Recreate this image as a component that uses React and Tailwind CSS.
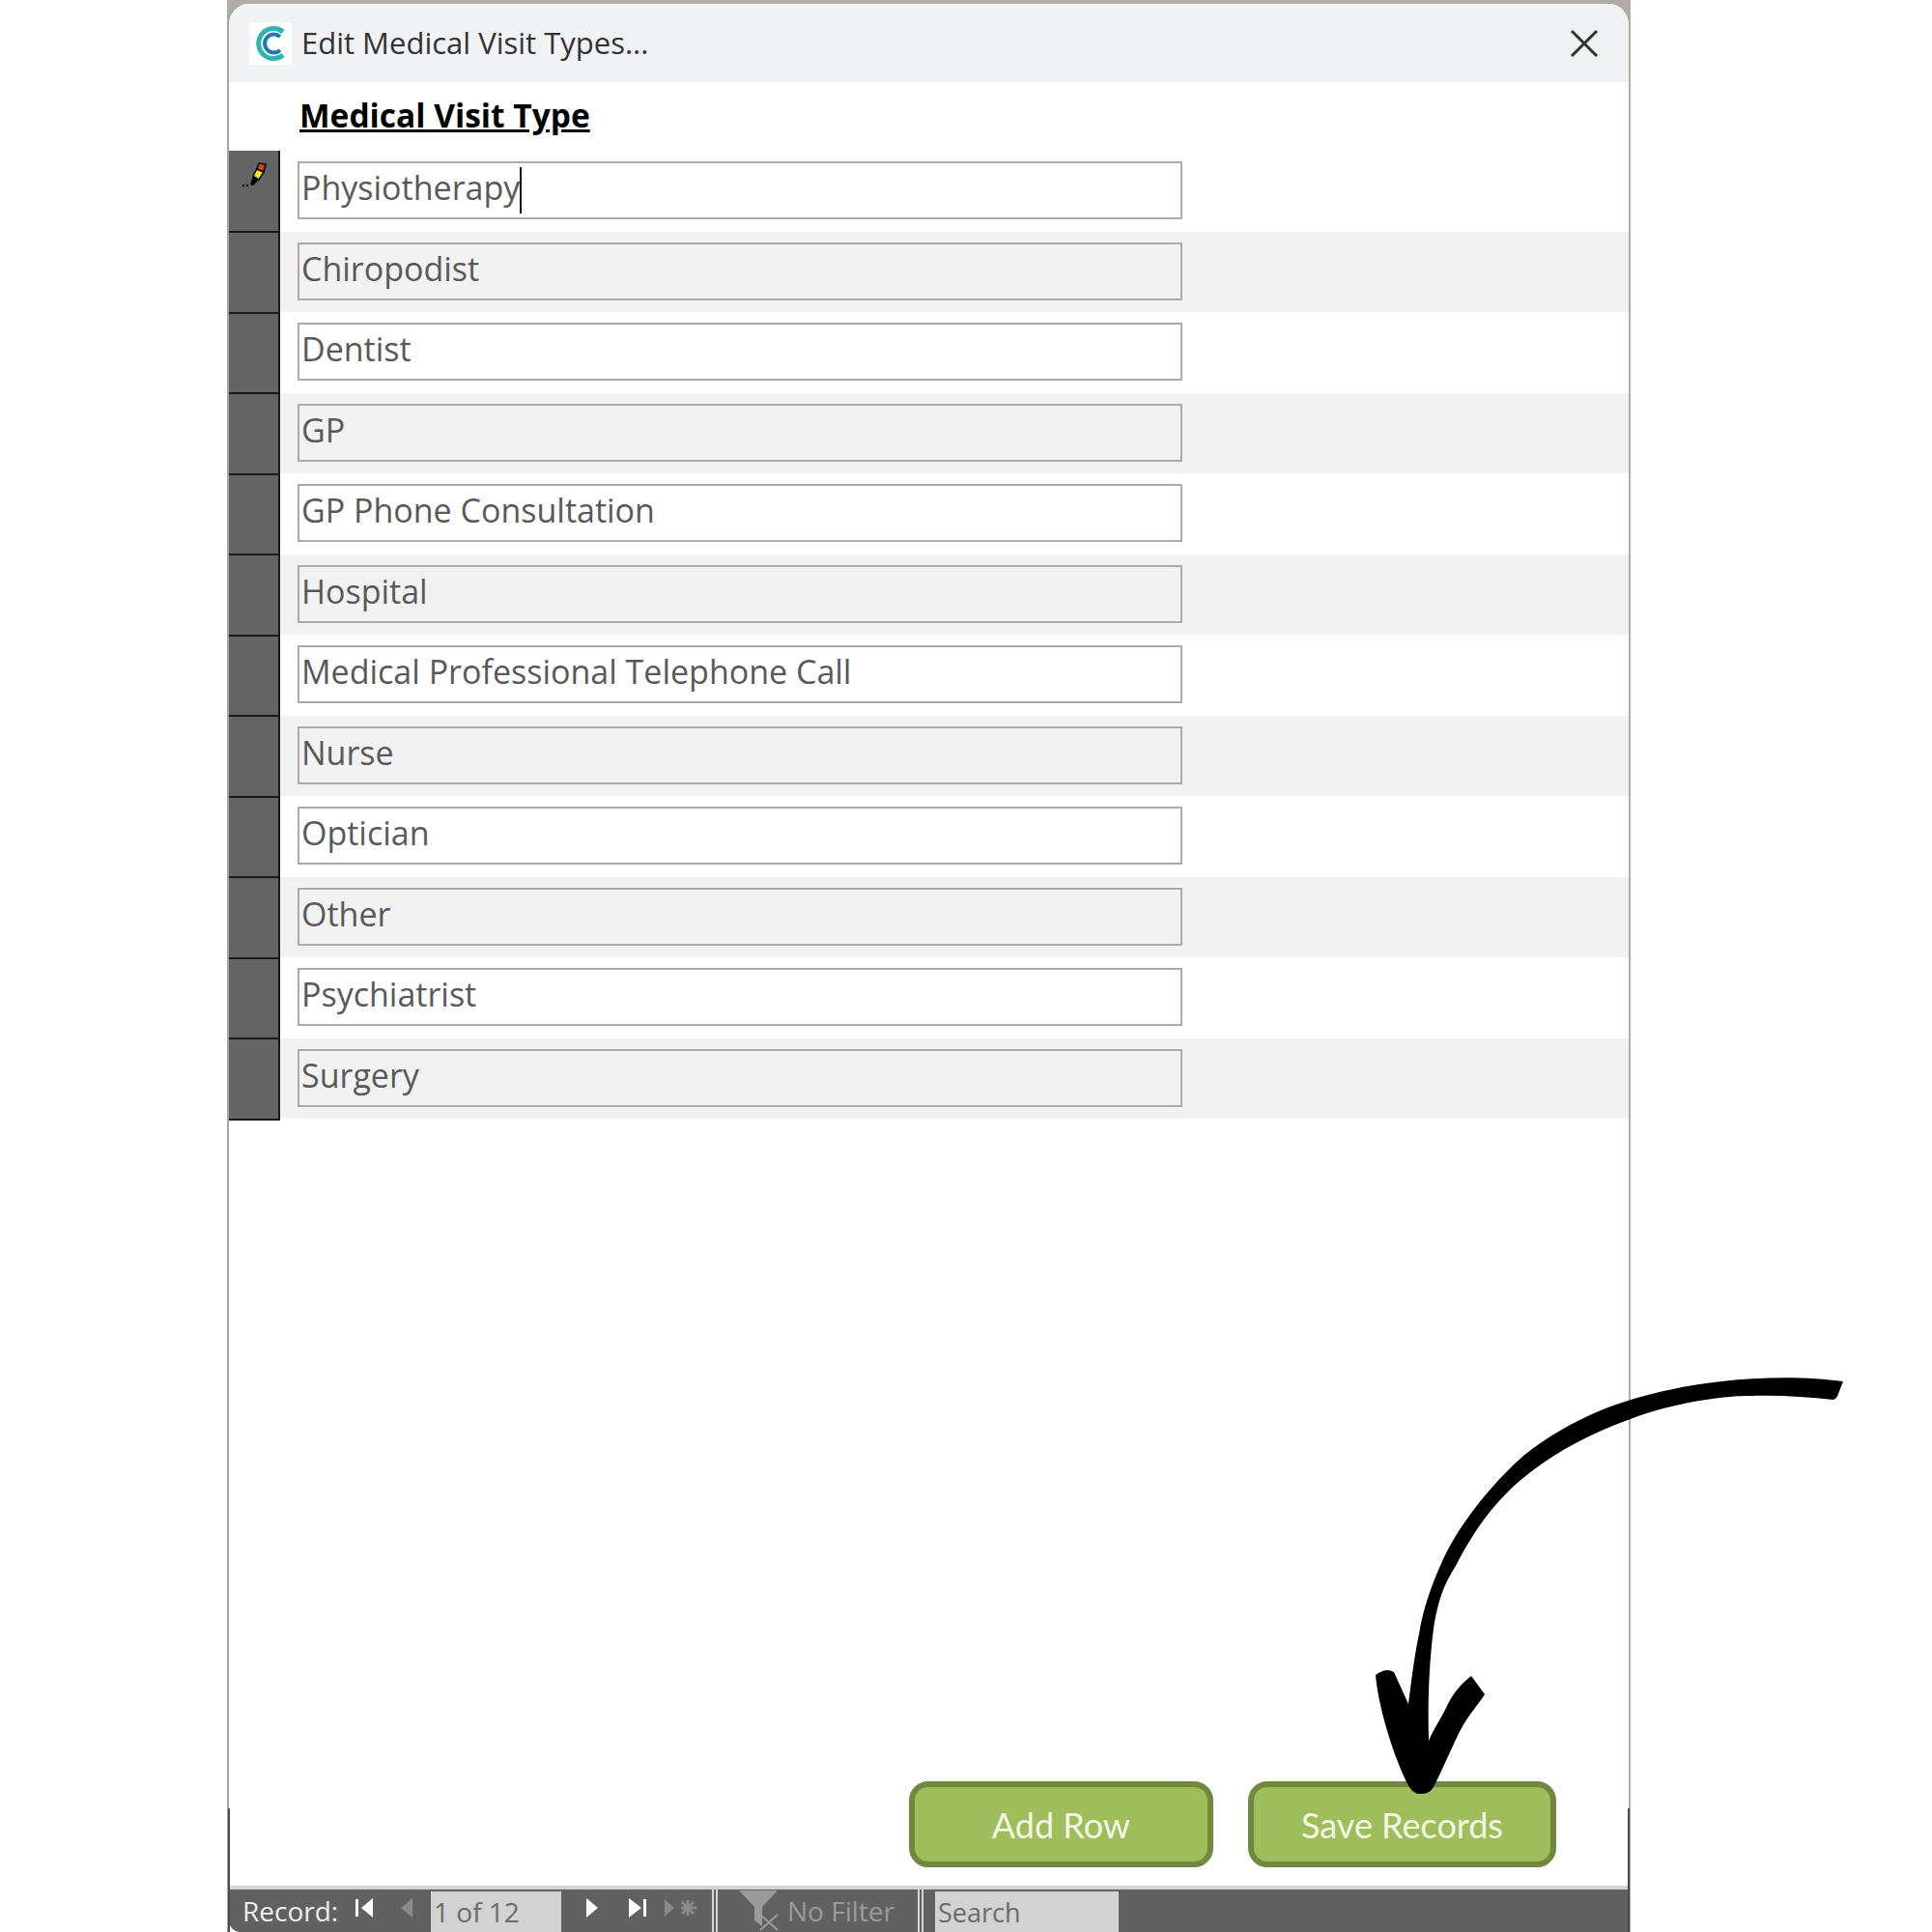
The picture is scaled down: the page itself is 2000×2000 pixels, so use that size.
const rows = [
  'Physiotherapy',
  'Chiropodist',
  'Dentist',
  'GP',
  'GP Phone Consultation',
  'Hospital',
  'Medical Professional Telephone Call',
  'Nurse',
  'Optician',
  'Other',
  'Psychiatrist',
  'Surgery',
];

const Logo = () => (
  <div className="w-[44px] h-[44px] bg-white flex items-center justify-center">
    <svg width="32" height="38" viewBox="0 0 32 38" fill="none">
      <path d="M29 7 A 15.5 15.5 0 1 0 29 31" stroke="#2db5b0" strokeWidth="5" />
      <path d="M26 12 A 9.5 9.5 0 1 0 26 26" stroke="#1f78b4" strokeWidth="4" />
    </svg>
  </div>
);

const Pencil = () => (
  <svg width="28" height="30" viewBox="0 0 28 30" className="mt-[9px] ml-[12px]">
    <path d="M10 26 L13 17 L20 20 L13 27 Z" fill="#000" />
    <path d="M13 17 L17 10 L24 13 L19 21 Z" fill="#ffe81a" stroke="#000" strokeWidth="1.5" />
    <path d="M17 10 L19 4 L26 5 L24 13 Z" fill="#d8401c" stroke="#000" strokeWidth="1.5" />
    <rect x="2" y="26" width="2" height="2" fill="#000" />
    <rect x="6" y="26" width="2" height="2" fill="#000" />
  </svg>
);

const Row = ({ label, index }) => (
  <div className={`flex items-start h-[83.5px] ${index % 2 ? 'bg-[#f2f2f2]' : 'bg-white'}`}>
    {/* selector sits 1.5px lower than its row, as in the picture */}
    <div className={`relative w-[53px] shrink-0 bg-[#646464] border-r-2 border-b-2 border-[#1a1a1a] ${index === 0 ? 'h-[85px]' : 'h-[83.5px] mt-[1.5px]'}`}>
      {index === 0 && <Pencil />}
    </div>
    <div className="ml-[18px] mt-[11px] w-[916px] h-[60px] border-2 border-[#ababab] pl-[2px] text-[34px] leading-[50px] text-[#595959] flex">
      <span>{label}</span>
      {index === 0 && <span className="w-[2px] h-[48px] bg-[#111] self-center" />}
    </div>
  </div>
);

const GreenButton = ({ label, width }) => (
  <div className={`${width} h-[89px] rounded-[20px] border-[6px] border-[#71883f] bg-[#9fbd5a] flex items-center justify-center text-[36px] text-[#f3f7e6] font-['Lato',sans-serif]`}>
    {label}
  </div>
);

const NavBar = () => (
  <div className="h-[48px] bg-[#616161] border-t-[4px] border-[#d4d4d4] flex text-[28px] leading-[44px] font-['Open_Sans',sans-serif] rounded-bl-[12px]">
    <span className="ml-[14px] w-[117px] text-[#eeeeee]">Record:</span>
    <svg width="20" height="22" viewBox="0 0 20 22" className="mt-[8px]">
      <rect x="0" y="2" width="3" height="18" fill="#fff" />
      <path d="M18 1 V21 L6 11 Z" fill="#fff" />
    </svg>
    <svg width="14" height="22" viewBox="0 0 14 22" className="mt-[8px] ml-[26px]">
      <path d="M13 1 V21 L1 11 Z" fill="#8a8a8a" />
    </svg>
    <div className="ml-[18px] w-[135px] h-[42px] mt-[2px] bg-[#d2d2d2] text-[#6b6b6b] pl-[3px] leading-[42px]">1 of 12</div>
    <svg width="14" height="22" viewBox="0 0 14 22" className="mt-[8px] ml-[25px]">
      <path d="M1 1 V21 L13 11 Z" fill="#fff" />
    </svg>
    <svg width="20" height="22" viewBox="0 0 20 22" className="mt-[8px] ml-[30px]">
      <path d="M1 1 V21 L14 11 Z" fill="#fff" />
      <rect x="16" y="2" width="3" height="18" fill="#fff" />
    </svg>
    <svg width="36" height="22" viewBox="0 0 36 22" className="mt-[8px] ml-[17px]">
      <path d="M1 2 V20 L11 11 Z" fill="#8a8a8a" />
      <path d="M25 3 V19 M18 11 H34 M19 5 L31 17 M31 5 L19 17" stroke="#8a8a8a" strokeWidth="3" />
    </svg>
    <div className="ml-[14px] w-[6px] border-x-2 border-[#d4d4d4]" />
    <svg width="50" height="44" viewBox="0 0 50 44" className="ml-[22px]">
      <path d="M0 1 H40 L24 18 V38 L16 32 V18 Z" fill="#9b9b9b" />
      <path d="M22 42 L40 26 M22 26 L40 42" stroke="#9b9b9b" strokeWidth="2" />
    </svg>
    <span className="w-[135px] text-[#9a9a9a]">No Filter</span>
    <div className="w-[6px] border-x-2 border-[#d4d4d4]" />
    <div className="ml-[12px] w-[190px] h-[42px] mt-[2px] bg-[#d2d2d2] text-[#6b6b6b] text-[27px] pl-[3px] leading-[44px]">Search</div>
  </div>
);

export default function App() {
  return (
    <div className="relative w-[2000px] h-[2000px] bg-white font-['Open_Sans',sans-serif] overflow-hidden">
      <div className="ml-[235px] w-[1453px] h-[2000px] bg-[#b0aca6] pt-[4px]">
        <div className="h-full bg-white border-l-2 border-r-2 border-l-[#a9a5a0] border-r-[#b5a89c] rounded-t-[22px] flex flex-col overflow-hidden">
          {/* Title bar */}
          <div className="h-[81px] shrink-0 bg-[#f1f2f4] flex items-center pl-[21px] pr-[31px]">
            <Logo />
            <span className="ml-[10px] text-[31px] text-[#333]">Edit Medical Visit Types...</span>
            <svg width="30" height="30" viewBox="0 0 30 30" className="ml-auto" stroke="#333" strokeWidth="3">
              <path d="M2 2 L28 28 M28 2 L2 28" />
            </svg>
          </div>

          {/* Header */}
          <div className="h-[71px] shrink-0 pl-[73px] pt-[10px] text-[33.5px] leading-[48px] font-bold text-black">
            <span className="underline">Medical Visit Type</span>
          </div>

          {/* Rows */}
          <div className="border-t-2 border-[#1a1a1a] w-[54px]" />
          <div className="-mt-[2px]">
            {rows.map((label, i) => (
              <Row key={label} label={label} index={i} />
            ))}
          </div>

          {/* Buttons */}
          <div className="mt-auto mb-[19px] flex justify-end gap-[36px] pr-[75px]">
            <GreenButton label="Add Row" width="w-[315px]" />
            <GreenButton label="Save Records" width="w-[319px]" />
          </div>

          <NavBar />
        </div>
      </div>

      {/* darker window edge beside the record bar */}
      <div className="absolute left-[236px] top-[1872px] w-[2px] h-[128px] bg-[#4a4a4a]" />
      <div className="absolute left-[1685px] top-[1872px] w-[2px] h-[128px] bg-[#4a4a4a]" />

      {/* Hand-drawn arrow */}
      <svg className="absolute inset-0 pointer-events-none" width="2000" height="2000" viewBox="0 0 2000 2000">
        <path
          fill="#000"
          d="M1908 1430 C1850 1422 1760 1426 1685 1450 C1640 1464 1605 1485 1577 1507 C1540 1540 1510 1580 1494 1614 C1480 1645 1474 1665 1470 1686 C1464 1715 1461 1740 1458 1764 L1443 1731 Q1435 1726 1424 1734 C1427 1770 1445 1825 1459 1850 Q1464 1858 1472 1857 Q1480 1857 1484 1850 C1497 1825 1508 1795 1519 1779 C1525 1770 1532 1762 1537 1754 L1523 1735 C1510 1745 1503 1755 1497 1768 C1490 1782 1484 1790 1479 1802 C1478 1765 1479 1725 1484 1686 C1489 1655 1495 1640 1507 1621 C1525 1585 1550 1550 1583 1525 C1615 1500 1650 1483 1685 1470 C1730 1452 1790 1444 1813 1445 C1840 1444 1870 1446 1898 1449 Q1902 1447 1903 1443 Z"
        />
      </svg>
    </div>
  );
}
